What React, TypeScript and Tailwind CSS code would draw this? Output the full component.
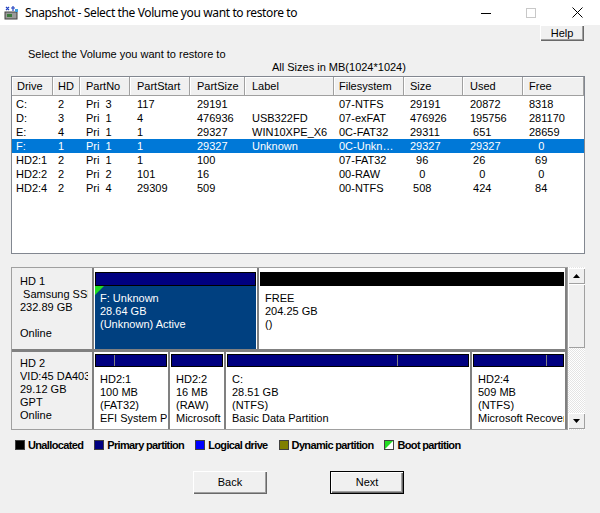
import React from "react"

const cols = [
  "w-[41px] pl-[4px]",
  "w-[27px] pl-[5px]",
  "w-[50px] pl-[6px]",
  "w-[60px] pl-[7px]",
  "w-[55px] pl-[7px]",
  "w-[89px] pl-[7px]",
  "w-[70px] pl-[5px]",
  "w-[59px] pl-[6px]",
  "w-[60px] pl-[7px]",
  "w-[61px] pl-[6px]",
]

const headers = ["Drive", "HD", "PartNo", "PartStart", "PartSize", "Label", "Filesystem", "Size", "Used", "Free"]

const rows = [
  ["C:", "2", "Pri  3", "117", "29191", "", "07-NTFS", "29191", "20872", "8318"],
  ["D:", "3", "Pri  1", "4", "476936", "USB322FD", "07-exFAT", "476926", "195756", "281170"],
  ["E:", "4", "Pri  1", "1", "29327", "WIN10XPE_X6", "0C-FAT32", "29311", " 651", "28659"],
  ["F:", "1", "Pri  1", "1", "29327", "Unknown", "0C-Unkn\u2026", "29327", "29327", "   0"],
  ["HD2:1", "2", "Pri  1", "1", "100", "", "07-FAT32", "  96", " 26", "  69"],
  ["HD2:2", "2", "Pri  2", "101", "16", "", "00-RAW", "   0", "   0", "   0"],
  ["HD2:4", "2", "Pri  4", "29309", "509", "", "00-NTFS", " 508", " 424", "  84"],
]

type Part = {
  w: string
  lines: string[]
  black?: boolean
  used?: number
  sel?: boolean
  boot?: boolean
}

const hd1: Part[] = [
  { w: "w-[165px] shrink-0", lines: ["F: Unknown", "28.64 GB", "(Unknown) Active"], sel: true, boot: true },
  { w: "min-w-0 flex-1", lines: ["FREE", "204.25 GB", "()"], black: true },
]

const hd2: Part[] = [
  { w: "w-[76px] shrink-0", lines: ["HD2:1", "100 MB", "(FAT32)", "EFI System Partition"], used: 27 },
  { w: "w-[56px] shrink-0", lines: ["HD2:2", "16 MB", "(RAW)", "Microsoft Reserved"] },
  { w: "w-[246px] shrink-0", lines: ["C:", "28.51 GB", "(NTFS)", "Basic Data Partition"], used: 71 },
  { w: "min-w-0 flex-1", lines: ["HD2:4", "509 MB", "(NTFS)", "Microsoft Recovery"], used: 82 },
]

function WinButton({ label, wide, def }: { label: string; wide?: boolean; def?: boolean }) {
  return (
    <div
      className={`flex items-center justify-center bg-[#f0f0f0] text-[11px] text-black ${
        wide ? "h-[23px] w-[74px]" : "h-[16px] w-[44px]"
      } ${
        def
          ? "border border-black shadow-[inset_1px_1px_0_#ffffff,inset_-1px_-1px_0_#696969,inset_-2px_-2px_0_#a0a0a0]"
          : "shadow-[inset_1px_1px_0_#ffffff,inset_-1px_-1px_0_#696969,inset_-2px_-2px_0_#a0a0a0]"
      }`}
    >
      {label}
    </div>
  )
}

function Partition({ p, top }: { p: Part; top: boolean }) {
  return (
    <div className={`${p.w} flex flex-col border-r-2 border-[#808080] px-[1px] ${top ? "pt-[4px]" : "pt-[2px]"}`}>
      <div
        className={`flex border border-black ${top ? "h-[14px]" : "h-[13px]"} ${
          p.black ? "bg-black" : "bg-[#000080]"
        }`}
      >
        {p.used ? <div className="h-full border-r border-[#808080]" style={{ width: `${p.used}%` }} /> : null}
      </div>
      <div
        className={`relative flex-1 overflow-hidden whitespace-pre pl-[5px] pt-[6px] leading-[13px] ${
          p.sel ? "bg-[#004080] text-white" : "text-black"
        }`}
      >
        {p.boot && (
          <svg className="absolute left-0 top-0" width="9" height="9" viewBox="0 0 9 9">
            <polygon points="0,0 9,0 0,9" fill="#22dd22" />
          </svg>
        )}
        {p.lines.map((l) => (
          <div key={l}>{l}</div>
        ))}
      </div>
    </div>
  )
}

function Legend({ color, label, boot }: { color: string; label: string; boot?: boolean }) {
  return (
    <div className="flex items-center gap-[3px]">
      {boot ? (
        <svg width="10" height="10" viewBox="0 0 10 10">
          <rect x="0.5" y="0.5" width="9" height="9" fill="#ffffff" stroke="#404040" />
          <polygon points="1,1 9,1 1,9" fill="#22dd22" />
        </svg>
      ) : (
        <div className={`h-[10px] w-[10px] border border-[#404040] ${color}`} />
      )}
      <span className="font-bold tracking-[-0.65px] text-black">{label}</span>
    </div>
  )
}

export default function App() {
  return (
    <div className="flex h-[513px] w-[600px] flex-col overflow-hidden bg-[#f0f0f0] font-['Liberation_Sans',Arial,sans-serif] text-[11px] text-black">
      {/* Title bar */}
      <div className="flex h-[25px] items-center bg-white">
        <svg className="ml-[4px]" width="15" height="14" viewBox="0 0 15 14">
          <rect x="1" y="6" width="12" height="7" fill="#9a9a9a" stroke="#404040" />
          <rect x="3" y="8" width="5" height="3" fill="#3a7a3a" />
          <path d="M2 1 L5 4 M5 1 L2 4 M9 0 L9 5 M7 2 L11 2" stroke="#2040c0" strokeWidth="1.2" />
          <rect x="11" y="3" width="3" height="3" fill="#40a0e0" />
        </svg>
        <span className="ml-[6px] font-['Noto_Sans',sans-serif] text-[12px] tracking-[-0.38px]">
          Snapshot - Select the Volume you want to restore to
        </span>
        <div className="ml-auto flex h-full items-center">
          <svg className="mr-[35px]" width="10" height="10" viewBox="0 0 10 10">
            <line x1="0" y1="5.5" x2="10" y2="5.5" stroke="#000" strokeWidth="1" />
          </svg>
          <svg className="mr-[36px]" width="10" height="10" viewBox="0 0 10 10">
            <rect x="0.5" y="0.5" width="9" height="9" fill="none" stroke="#c8c8c8" />
          </svg>
          <svg className="mr-[17px]" width="11" height="11" viewBox="0 0 11 11">
            <path d="M0.5 0.5 L10.5 10.5 M10.5 0.5 L0.5 10.5" stroke="#000" strokeWidth="1" />
          </svg>
        </div>
      </div>

      {/* Help */}
      <div className="flex justify-end pr-[16px]">
        <WinButton label="Help" />
      </div>

      <div className="mt-[7px] pl-[28px] leading-[13px]">Select the Volume you want to restore to</div>
      <div className="pl-[272px] leading-[13px]">All Sizes in MB(1024*1024)</div>

      {/* Volume list */}
      <div className="ml-[11px] mt-[2px] h-[178px] w-[574px] border border-[#828790] bg-white">
        <div className="flex h-[19px]">
          {headers.map((h, i) => (
            <div
              key={h}
              className={`${cols[i]} flex items-center border-b border-r border-[#a0a0a0] bg-[#f0f0f0] shadow-[inset_1px_1px_0_#ffffff] ${
                i === 0 ? "pl-[5px]" : ""
              }`}
            >
              {h}
            </div>
          ))}
        </div>
        <div className="pt-[1px]">
          {rows.map((r, ri) => (
            <div key={ri} className={`flex h-[14px] items-center ${ri === 3 ? "bg-[#0078d7] text-white" : ""}`}>
              {r.map((c, ci) => (
                <div key={ci} className={`${cols[ci]} overflow-hidden whitespace-pre`}>
                  {c}
                </div>
              ))}
            </div>
          ))}
        </div>
      </div>

      {/* Disk map */}
      <div className="ml-[11px] mt-[13px] flex">
        <div className="flex h-[163px] w-[557px] flex-col border border-[#a0a0a0] bg-white">
          <div className="flex h-[84px] border-b-[3px] border-[#808080]">
            <div className="w-[82px] shrink-0 border-r-2 border-[#808080] bg-[#f0f0f0] pt-[7px] leading-[13px]">
              <div className="ml-[8px] w-[68px] overflow-hidden whitespace-pre">
                <div>HD 1</div>
                <div> Samsung SSD 860</div>
                <div>232.89 GB</div>
                <div>&nbsp;</div>
                <div>Online</div>
              </div>
            </div>
            {hd1.map((p) => (
              <Partition key={p.lines[0]} p={p} top />
            ))}
          </div>
          <div className="flex flex-1">
            <div className="w-[82px] shrink-0 border-r-2 border-[#808080] bg-[#f0f0f0] pt-[5px] leading-[13px]">
              <div className="ml-[8px] w-[68px] overflow-hidden whitespace-pre">
                <div>HD 2</div>
                <div>VID:45 DA4033</div>
                <div>29.12 GB</div>
                <div>GPT</div>
                <div>Online</div>
              </div>
            </div>
            {hd2.map((p) => (
              <Partition key={p.lines[0]} p={p} top={false} />
            ))}
          </div>
        </div>

        {/* Scrollbar */}
        <div className="flex h-[163px] w-[17px] flex-col bg-[repeating-conic-gradient(#e4e4e4_0%_25%,#ffffff_0%_50%)] bg-size-[2px_2px]">
          <div className="mt-[1px] flex h-[16px] items-center justify-center bg-[#f0f0f0] shadow-[inset_1px_1px_0_#ffffff,inset_-1px_-1px_0_#a0a0a0]">
            <svg width="7" height="4" viewBox="0 0 7 4">
              <polygon points="3.5,0 7,4 0,4" fill="#000" />
            </svg>
          </div>
          <div className="h-[64px] bg-[#f0f0f0] shadow-[inset_1px_1px_0_#ffffff,inset_-1px_-1px_0_#a0a0a0]" />
          <div className="flex-1" />
          <div className="mb-[1px] flex h-[16px] items-center justify-center bg-[#f0f0f0] shadow-[inset_1px_1px_0_#ffffff,inset_-1px_-1px_0_#a0a0a0]">
            <svg width="7" height="4" viewBox="0 0 7 4">
              <polygon points="0,0 7,0 3.5,4" fill="#000" />
            </svg>
          </div>
        </div>
      </div>

      {/* Legend */}
      <div className="ml-[15px] mt-[10px] flex h-[10px] items-center gap-[11px]">
        <Legend color="bg-black" label="Unallocated" />
        <Legend color="bg-[#000080]" label="Primary partition" />
        <Legend color="bg-[#0000ff]" label="Logical drive" />
        <Legend color="bg-[#808000]" label="Dynamic partition" />
        <Legend color="" label="Boot partition" boot />
      </div>

      {/* Buttons */}
      <div className="mt-[21px] flex pl-[193px]">
        <WinButton label="Back" wide />
        <div className="ml-[63px]">
          <WinButton label="Next" wide def />
        </div>
      </div>
    </div>
  )
}
